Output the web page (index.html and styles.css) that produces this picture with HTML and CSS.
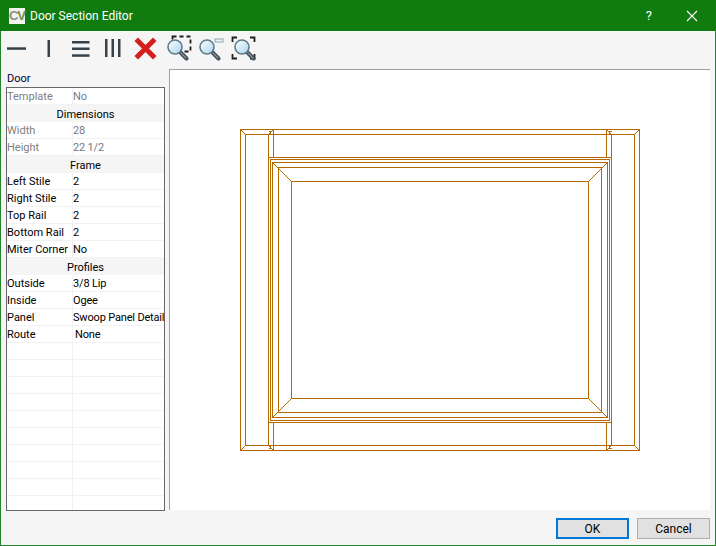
FILE: index.html
```html
<!DOCTYPE html>
<html lang="en">
<head>
  <meta charset="UTF-8" />
  <title>Door Section Editor</title>
  <link rel="stylesheet" href="styles.css">
</head>
<body>

  <div class="window">
    <div class="title-bar">
      <span class="app-logo"><span class="logo-c">C</span><span class="logo-v">V</span></span>
      <span class="title-text">Door Section Editor</span>
      <span class="help-btn">?</span>
      <svg class="close-btn" width="12" height="12" viewBox="0 0 12 12">
        <path d="M1 1 L11 11 M11 1 L1 11" stroke="#fff" stroke-width="1.1" fill="none" />
      </svg>
    </div>

    <div class="toolbar">
      <svg class="toolbar-icons" width="260" height="37" viewBox="0 31 260 37">
        <defs>
          <linearGradient id="lens" x1="0" y1="0" x2="1" y2="1">
            <stop offset="0" stop-color="#ffffff" />
            <stop offset="1" stop-color="#a9d3ee" />
          </linearGradient>
          <g id="glass">
            <path d="M5.500 5.500 L11.500 11.500" stroke="#3f4a52" stroke-width="4" stroke-linecap="round" />
            <path d="M6 6 L11 11" stroke="#8b969d" stroke-width="1.2" stroke-linecap="round" />
            <circle cx="0" cy="0" r="7" fill="url(#lens)" stroke="#5f7c8c" stroke-width="1.6" />
          </g>
        </defs>
        <!-- split buttons -->
        <rect x="7" y="47.300" width="19" height="2.500" fill="#36414a" />
        <rect x="47.500" y="40" width="2.500" height="17" fill="#36414a" />
        <rect x="72" y="41" width="17.500" height="2.500" fill="#36414a" />
        <rect x="72" y="47.500" width="17.500" height="2.500" fill="#36414a" />
        <rect x="72" y="54.300" width="17.500" height="2.500" fill="#36414a" />
        <rect x="105" y="39" width="2.500" height="18" fill="#36414a" />
        <rect x="111.500" y="39" width="2.500" height="18" fill="#36414a" />
        <rect x="118" y="39" width="2.500" height="18" fill="#36414a" />
        <!-- delete -->
        <path d="M138 41 L153 56 M153 41 L138 56" stroke="#d3201f" stroke-width="5" stroke-linecap="square" />
        <!-- zoom window -->
        <rect x="172.500" y="36.500" width="18" height="15" fill="none" stroke="#1f1f1f" stroke-width="1.800" stroke-dasharray="4 3" />
        <use href="#glass" x="175" y="47" />
        <!-- zoom out -->
        <rect x="215" y="39" width="8" height="3" fill="#eef5f9" stroke="#8fa3ae" stroke-width="1" />
        <use href="#glass" x="207" y="47" />
        <!-- zoom extents -->
        <path d="M232.500 42 V37.500 H237 M250 37.500 H254.500 V42 M232.500 54 V58.500 H237 M250 58.500 H254.500 V54" fill="none" stroke="#1f1f1f" stroke-width="1.800" />
        <use href="#glass" x="242" y="47" />
      </svg>
    </div>

    <div class="main">
      <div class="side-panel">
        <div class="panel-header">Door</div>
        <div class="prop-grid">
          <div class="prop-row muted"><span class="prop-name">Template</span><span class="prop-value">No</span></div>
          <div class="prop-section">Dimensions</div>
          <div class="prop-row muted"><span class="prop-name">Width</span><span class="prop-value">28</span></div>
          <div class="prop-row muted"><span class="prop-name">Height</span><span class="prop-value">22 1/2</span></div>
          <div class="prop-section">Frame</div>
          <div class="prop-row"><span class="prop-name">Left Stile</span><span class="prop-value">2</span></div>
          <div class="prop-row"><span class="prop-name">Right Stile</span><span class="prop-value">2</span></div>
          <div class="prop-row"><span class="prop-name">Top Rail</span><span class="prop-value">2</span></div>
          <div class="prop-row"><span class="prop-name">Bottom Rail</span><span class="prop-value">2</span></div>
          <div class="prop-row"><span class="prop-name">Miter Corner</span><span class="prop-value">No</span></div>
          <div class="prop-section">Profiles</div>
          <div class="prop-row"><span class="prop-name">Outside</span><span class="prop-value">3/8 Lip</span></div>
          <div class="prop-row"><span class="prop-name">Inside</span><span class="prop-value">Ogee</span></div>
          <div class="prop-row"><span class="prop-name">Panel</span><span class="prop-value">Swoop Panel Detail</span></div>
          <div class="prop-row"><span class="prop-name">Route</span><span class="prop-value indent">None</span></div>
          <div class="prop-row"><span class="prop-name"></span><span class="prop-value"></span></div>
          <div class="prop-row"><span class="prop-name"></span><span class="prop-value"></span></div>
          <div class="prop-row"><span class="prop-name"></span><span class="prop-value"></span></div>
          <div class="prop-row"><span class="prop-name"></span><span class="prop-value"></span></div>
          <div class="prop-row"><span class="prop-name"></span><span class="prop-value"></span></div>
          <div class="prop-row"><span class="prop-name"></span><span class="prop-value"></span></div>
          <div class="prop-row"><span class="prop-name"></span><span class="prop-value"></span></div>
          <div class="prop-row"><span class="prop-name"></span><span class="prop-value"></span></div>
          <div class="prop-row"><span class="prop-name"></span><span class="prop-value"></span></div>
          <div class="prop-row"><span class="prop-name"></span><span class="prop-value"></span></div>
        </div>
      </div>

      <div class="canvas">
        <svg class="door" width="541" height="440" viewBox="170 70 541 440">
          <g fill="none" stroke="#b36800" stroke-width="1" shape-rendering="crispEdges">
            <!-- outer frame -->
            <path d="M240.500 129.500 H639.500 V450.500 H240.500 Z" />
            <path d="M245.500 134.500 H634.500 V445.500 H245.500 Z" />
            <path d="M240.500 129.500 L245.500 134.500 M639.500 129.500 L634.500 134.500 M240.500 450.500 L245.500 445.500 M639.500 450.500 L634.500 445.500" />
            <!-- stiles -->
            <path d="M268.500 134.500 V445.500 M273.500 129.500 V157.500 M273.500 422.500 V450.500" />
            <path d="M611.500 134.500 V445.500 M606.500 129.500 V157.500 M606.500 422.500 V450.500" />
            <path d="M268.500 134.500 L273.500 129.500 M611.500 134.500 L606.500 129.500 M268.500 445.500 L273.500 450.500 M611.500 445.500 L606.500 450.500" />
            <path d="M268.500 131.500 H270.500 V134.500 M611.500 131.500 H609.500 V134.500 M268.500 448.500 H270.500 V445.500 M611.500 448.500 H609.500 V445.500" />
            <!-- panel -->
            <path d="M268.500 157.500 H611.500 V422.500 H268.500 Z" />
            <path d="M270.500 159.500 H609.500 V420.500 H270.500 Z" />
            <path d="M272.500 162.500 H607.500 V417.500 H272.500 Z" />
            <path d="M278.500 167.500 H601.500 V412.500 H278.500 Z" />
            <path d="M291.500 181.500 H588.500 V398.500 H291.500 Z" />
            <path d="M272.500 162.500 L291.500 181.500 M607.500 162.500 L588.500 181.500 M272.500 417.500 L291.500 398.500 M607.500 417.500 L588.500 398.500" />
          </g>
        </svg>
      </div>
    </div>

    <div class="footer">
      <button class="btn btn-default">OK</button>
      <button class="btn">Cancel</button>
    </div>
  </div>

</body>
</html>
```

FILE: styles.css
```css
* {
  box-sizing: border-box;
}

html, body {
  margin: 0;
  height: 100%;
  overflow: hidden;
}

body {
  font-family: Roboto, Arial, sans-serif;
  font-size: 11px;
  color: #000;
}

.window {
  display: flex;
  flex-direction: column;
  width: 716px;
  height: 546px;
  background: #f5f5f5;
  border-left: 1px solid #20882a;
  border-right: 1px solid #20882a;
  border-bottom: 1px solid #20882a;
}

.title-bar {
  display: flex;
  align-items: center;
  flex: 0 0 31px;
  margin: 0 -1px;
  padding-left: 9px;
  background: #107c10;
  color: #fff;
}

.app-logo {
  display: flex;
  align-items: center;
  justify-content: center;
  width: 16px;
  height: 16px;
  background: #f2f2ee;
  font-family: "Liberation Sans", Arial, sans-serif;
  font-size: 13px;
  font-weight: bold;
  letter-spacing: -1px;
}

.logo-c {
  color: #8a8f86;
}

.logo-v {
  color: #6f8f4a;
}

.title-text {
  margin-left: 5px;
  font-size: 12px;
  flex: 1;
}

.help-btn {
  margin-right: 34px;
  font-size: 13px;
}

.close-btn {
  margin-right: 18px;
}

.toolbar {
  flex: 0 0 37px;
  margin-left: -1px;
}

.toolbar-icons {
  display: block;
}

.main {
  display: flex;
  flex: 0 0 443px;
  padding-left: 5px;
}

.side-panel {
  display: flex;
  flex-direction: column;
  width: 159px;
  margin-top: 1px;
}

.panel-header {
  flex: 0 0 18px;
  padding: 2px 0 0 1px;
  line-height: 16px;
  color: #000033;
}

.prop-grid {
  flex: 0 0 424px;
  overflow: hidden;
  background: #fff;
  border: 1px solid #666;
}

.prop-row {
  display: flex;
  height: 17px;
  line-height: 18px;
  border-bottom: 1px solid #f2f2f2;
  white-space: nowrap;
}

.prop-name {
  flex: 0 0 66px;
  height: 16px;
  border-right: 1px solid #f2f2f2;
}

.prop-value {
  flex: none;
  letter-spacing: -0.17px;
}

.prop-value.indent {
  padding-left: 2px;
}

.muted .prop-name {
  color: #808080;
}

.muted .prop-value {
  color: #77778a;
}

.prop-section {
  height: 17px;
  line-height: 19px;
  text-align: center;
  background: #f5f5f5;
}

.canvas {
  width: 541px;
  height: 441px;
  margin: 1px 0 0 4px;
  background: #fff;
  border-top: 1px solid #a0a0a0;
  border-left: 1px solid #a0a0a0;
}

.door {
  display: block;
}

.footer {
  display: flex;
  justify-content: flex-end;
  gap: 8px;
  padding: 7px 5px 0 0;
}

.btn {
  width: 73px;
  height: 21px;
  padding: 0;
  font-family: inherit;
  font-size: 12px;
  background: #e1e1e1;
  border: 1px solid #adadad;
  color: #000;
}

.btn-default {
  border: 2px solid #0078d7;
}
```
